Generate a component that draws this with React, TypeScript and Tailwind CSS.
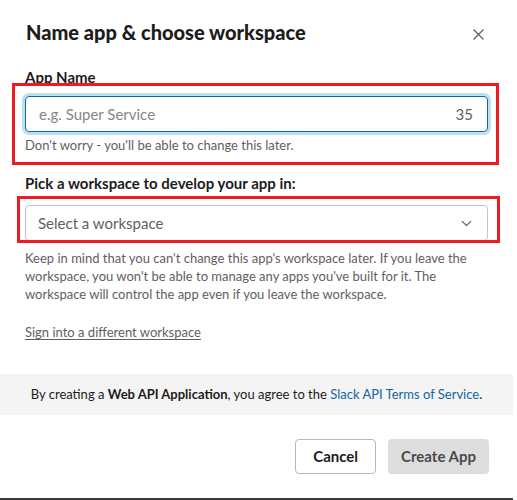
import { ChevronDown } from 'lucide-react';

export default function App() {
  return (
    <div className="w-[517px] h-[500px] bg-white flex flex-col font-['Lato','Liberation_Sans',sans-serif] text-[#1d1c1d] overflow-hidden">
      <div className="w-[513px] flex-1 flex flex-col">
        {/* header */}
        <div className="flex items-start justify-between pl-[26px] pr-[29px] pt-[20px] h-[52px]">
          <h1 className="text-[20px] leading-[1.2] font-black">Name app &amp; choose workspace</h1>
          <button className="mt-[9px] text-[#616061]">
            <svg width="11" height="11" viewBox="0 0 11 11" fill="none" stroke="currentColor" strokeWidth="1.3">
              <path d="M0.5 0.5L10.5 10.5M10.5 0.5L0.5 10.5" />
            </svg>
          </button>
        </div>

        {/* app name */}
        <div className="px-[25px] pt-[16px]">
          <label className="block text-[15px] leading-[18px] font-bold">App Name</label>
          <div className="relative mt-[10px]">
            <div className="flex items-center justify-between h-[36px] border border-[#1264a3] rounded-[4px] shadow-[0_0_0_3px_rgba(29,155,209,0.3)] pl-[13px] pr-[14px] text-[15px]">
              <span className="text-[#868686]">e.g. Super Service</span>
              <span className="text-[#616061]">35</span>
            </div>
            <p className="mt-[4px] text-[13px] leading-[18px] text-[#616061]">Don&apos;t worry - you&apos;ll be able to change this later.</p>
            <div className="absolute -left-[13px] -right-[11px] -top-[13px] -bottom-[11px] border-[3px] border-[#ed1c24] pointer-events-none" />
          </div>
        </div>

        {/* workspace */}
        <div className="px-[25px] pt-[20px]">
          <label className="block text-[15px] leading-[18px] font-bold">Pick a workspace to develop your app in:</label>
          <div className="relative mt-[13px]">
            <div className="flex items-center justify-between h-[36px] border border-[#c4c4c4] rounded-[4px] pl-[12px] pr-[12px] text-[15px]">
              <span className="text-[#616061]">Select a workspace</span>
              <ChevronDown className="w-[17px] h-[17px] text-[#616061]" strokeWidth={1.8} />
            </div>
            <div className="absolute -left-[8px] -right-[12px] -top-[9px] -bottom-[2px] border-[3px] border-[#ed1c24] pointer-events-none" />
          </div>
          <p className="mt-[8px] text-[13px] leading-[18px] text-[#616061]">
            Keep in mind that you can&apos;t change this app&apos;s workspace later. If you leave the workspace, you won&apos;t be able to manage any apps you&apos;ve built for it. The workspace will control the app even if you leave the workspace.
          </p>
          <a className="inline-block mt-[20px] text-[13px] leading-[18px] text-[#616061] underline underline-offset-[2px]">Sign into a different workspace</a>
        </div>

        {/* footer note */}
        <div className="mt-[31px] h-[41px] bg-[#f4f4f4] flex items-center justify-center text-[13px] text-[#1d1c1d]">
          <span>
            By creating a <b className="font-bold">Web API Application</b>, you agree to the{' '}
            <a className="text-[#1264a3]">Slack API Terms of Service</a>.
          </span>
        </div>

        {/* actions */}
        <div className="flex justify-end gap-[12px] pr-[24px] pt-[24px]">
          <button className="h-[35px] px-[17px] rounded-[4px] border border-[#b8b8b8] bg-white text-[15px] font-bold text-[#1d1c1d]">Cancel</button>
          <button className="h-[35px] px-[13px] rounded-[4px] bg-[#dddddd] text-[15px] font-bold text-[#4a4a4a]">Create App</button>
        </div>
      </div>
      <div className="h-[2px] w-[513px] bg-[#3c3c3c]" />
    </div>
  );
}
